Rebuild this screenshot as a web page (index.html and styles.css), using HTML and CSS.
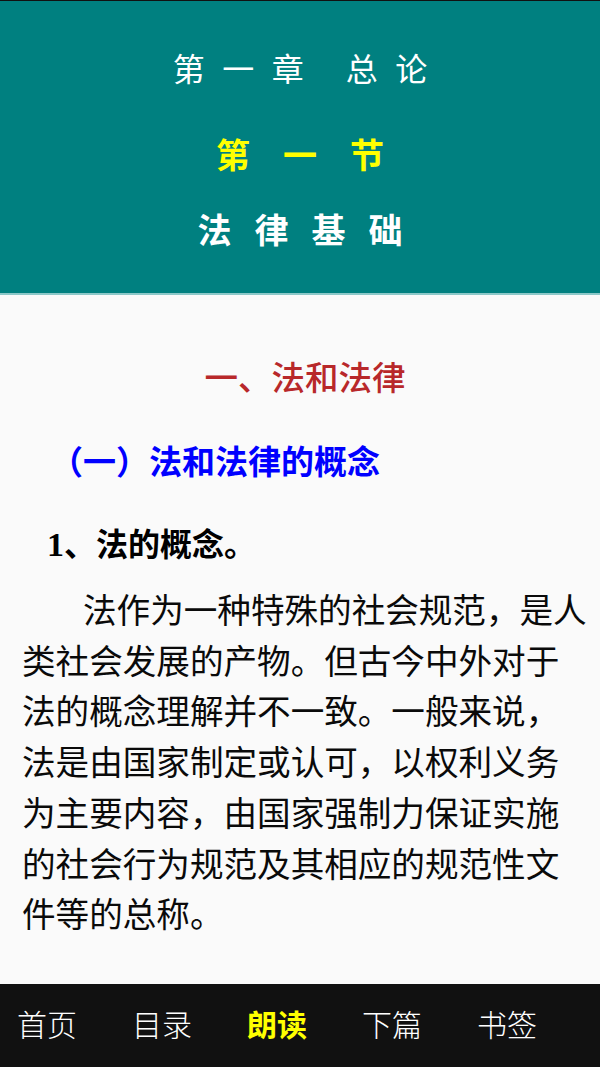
FILE: index.html
```html
<!DOCTYPE html>
<html lang="zh-CN">
<head>
<meta charset="utf-8">
<title>法律基础</title>
<link rel="stylesheet" href="styles.css">
</head>
<body>
<div class="page">
  <header class="banner">
    <div class="chapter">第一章 总论</div>
    <div class="section">第一节</div>
    <div class="subject">法律基础</div>
  </header>
  <main class="content">
    <h1 class="h-red">一、法和法律</h1>
    <h2 class="h-blue">（一）法和法律的概念</h2>
    <h3 class="h-black"><span class="num">1</span>、法的概念。</h3>
    <p class="para">法作为一种特殊的社会规范，是人类社会发展的产物。但古今中外对于法的概念理解并不一致。一般来说，法是由国家制定或认可，以权利义务为主要内容，由国家强制力保证实施的社会行为规范及其相应的规范性文件等的总称。</p>
  </main>
  <nav class="tabbar">
    <span class="tab">首页</span>
    <span class="tab">目录</span>
    <span class="tab active">朗读</span>
    <span class="tab">下篇</span>
    <span class="tab">书签</span>
  </nav>
</div>
</body>
</html>
```

FILE: styles.css
```css
html, body {
  margin: 0;
  padding: 0;
}
body {
  background: #111111;
  font-family: "Noto Sans CJK SC", "Noto Sans", sans-serif;
}
.page {
  height: 1067px;
  display: flex;
  flex-direction: column;
  overflow: hidden;
  background: #fafafa;
}
.banner {
  border-top: 1px solid #111111;
  background: #008080;
  height: 292px;
  border-bottom: 2px solid #8cc8c8;
  display: flex;
  flex-direction: column;
  align-items: center;
  color: #ffffff;
}
.chapter {
  margin-top: 41px;
  font-size: 32px;
  line-height: 50px;
  font-weight: 400;
  letter-spacing: 17.5px;
  margin-right: -17.5px;
}
.section {
  margin-top: 37px;
  font-size: 34px;
  line-height: 50px;
  font-weight: 700;
  color: #ffff00;
  letter-spacing: 33px;
  margin-right: -33px;
}
.subject {
  margin-top: 25px;
  font-size: 34px;
  line-height: 50px;
  font-weight: 700;
  letter-spacing: 23px;
  margin-right: -23px;
}
.content {
  flex: 1;
  padding: 56px 12px 0 22px;
}
.h-red {
  margin: 0;
  text-align: center;
  font-size: 33.5px;
  line-height: 50px;
  font-weight: 500;
  color: #b8282a;
}
.h-blue {
  margin: 34px 0 0 28px;
  font-size: 33px;
  line-height: 50px;
  font-weight: 700;
  color: #0000ff;
}
.h-black {
  margin: 32px 0 0 25px;
  font-size: 32px;
  line-height: 50px;
  font-weight: 700;
  color: #000000;
}
.num {
  font-family: "Liberation Serif", serif;
  font-size: 34px;
}
.para {
  margin: 14px 0 0 0;
  width: 566px;
  font-size: 33.6px;
  line-height: 50.7px;
  text-indent: 61px;
  color: #0a0a0a;
}
.tabbar {
  height: 83px;
  flex: none;
  background: #111111;
  display: flex;
  align-items: center;
  box-sizing: border-box;
  padding: 0 0 6px 17px;
  gap: 55px;
}
.tab {
  font-size: 30px;
  line-height: 40px;
  color: #ffffff;
  font-weight: 300;
  width: 60px;
  white-space: nowrap;
}
.tab.active {
  color: #ffff00;
  font-weight: 700;
}
```
